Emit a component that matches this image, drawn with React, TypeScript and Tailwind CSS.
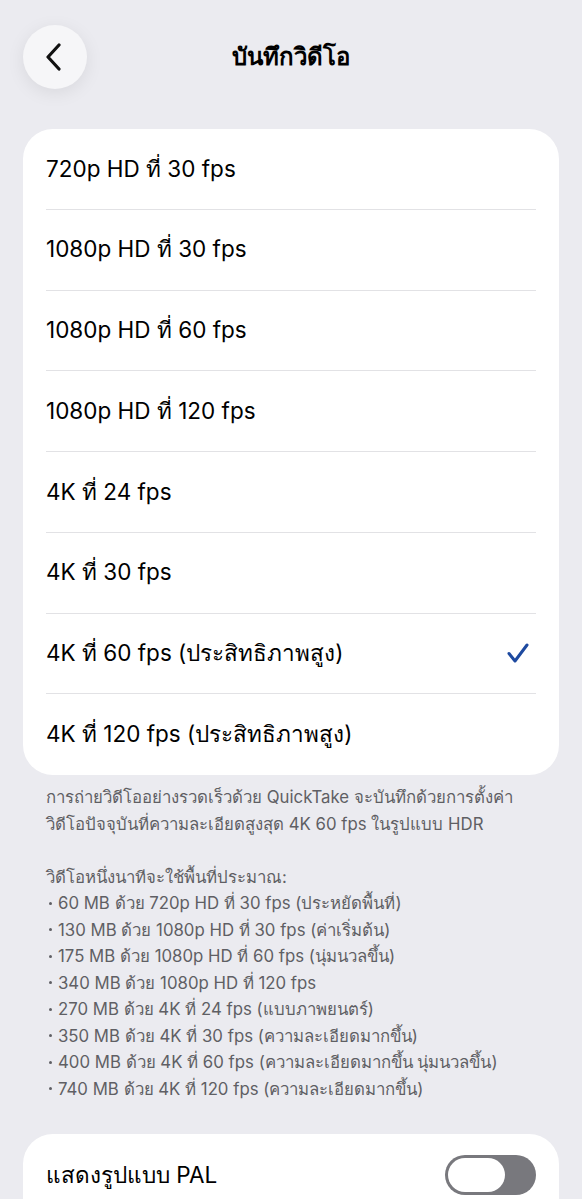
import React from "react";

const options = [
  "720p HD ที่ 30 fps",
  "1080p HD ที่ 30 fps",
  "1080p HD ที่ 60 fps",
  "1080p HD ที่ 120 fps",
  "4K ที่ 24 fps",
  "4K ที่ 30 fps",
  "4K ที่ 60 fps (ประสิทธิภาพสูง)",
  "4K ที่ 120 fps (ประสิทธิภาพสูง)",
];

const sizes = [
  "60 MB ด้วย 720p HD ที่ 30 fps (ประหยัดพื้นที่)",
  "130 MB ด้วย 1080p HD ที่ 30 fps (ค่าเริ่มต้น)",
  "175 MB ด้วย 1080p HD ที่ 60 fps (นุ่มนวลขึ้น)",
  "340 MB ด้วย 1080p HD ที่ 120 fps",
  "270 MB ด้วย 4K ที่ 24 fps (แบบภาพยนตร์)",
  "350 MB ด้วย 4K ที่ 30 fps (ความละเอียดมากขึ้น)",
  "400 MB ด้วย 4K ที่ 60 fps (ความละเอียดมากขึ้น นุ่มนวลขึ้น)",
  "740 MB ด้วย 4K ที่ 120 fps (ความละเอียดมากขึ้น)",
];

export default function App() {
  return (
    <div
      className="min-h-[1199px] w-[582px] bg-[#EBEBF0] text-black"
      style={{ fontFamily: 'Inter, "Noto Sans", sans-serif' }}
    >
      {/* Header */}
      <div className="relative flex h-[114px] items-start">
        <div className="ml-[23px] mt-[25px] flex h-[64px] w-[64px] items-center justify-center rounded-full bg-[#F6F6F8] shadow-[0_4px_18px_rgba(0,0,0,0.08)]">
          <svg width="18" height="28" viewBox="0 0 18 28" className="-ml-[2px]">
            <polyline
              points="14,2 3,14 14,26"
              fill="none"
              stroke="#111"
              strokeWidth="3.2"
              strokeLinecap="round"
              strokeLinejoin="round"
            />
          </svg>
        </div>
        <div className="absolute left-0 right-0 top-[38px] text-center text-[24px] font-semibold leading-[38px]">
          บันทึกวิดีโอ
        </div>
      </div>

      {/* Options card */}
      <div className="mx-[23px] mt-[15px] overflow-hidden rounded-[30px] bg-white">
        {options.map((o, i) => (
          <div
            key={o}
            className={
              i === options.length - 1
                ? "mx-[23px] flex h-[80.75px] items-center justify-between"
                : "mx-[23px] flex h-[80.75px] items-center justify-between border-b border-[#E2E2E5]"
            }
          >
            <span className="text-[22.5px] leading-none">{o}</span>
            {i === 6 && (
              <svg width="22" height="22" viewBox="0 0 22 22" className="mr-[7px]">
                <polyline
                  points="2,11.5 8,19 20,3"
                  fill="none"
                  stroke="#1E4AA0"
                  strokeWidth="3"
                  strokeLinecap="round"
                  strokeLinejoin="round"
                />
              </svg>
            )}
          </div>
        ))}
      </div>

      {/* Footer */}
      <div className="whitespace-nowrap pl-[46px] pt-[9px] text-[16.8px] leading-[26.5px] text-[#5F5F64]">
        <p>การถ่ายวิดีโออย่างรวดเร็วด้วย QuickTake จะบันทึกด้วยการตั้งค่า</p>
        <p>วิดีโอปัจจุบันที่ความละเอียดสูงสุด 4K 60 fps ในรูปแบบ HDR</p>
        <p>&nbsp;</p>
        <p>วิดีโอหนึ่งนาทีจะใช้พื้นที่ประมาณ:</p>
        {sizes.map((s) => (
          <p key={s} className="flex items-center">
            <span className="ml-[3px] mr-[6px] inline-block h-[3px] w-[3px] rounded-full bg-[#5F5F64]" />
            <span>{s}</span>
          </p>
        ))}
      </div>

      {/* PAL card */}
      <div className="mx-[23px] mt-[32px] flex h-[82px] items-center justify-between rounded-t-[30px] bg-white px-[23px]">
        <span className="text-[22.5px] leading-none">แสดงรูปแบบ PAL</span>
        <div className="relative h-[40px] w-[91px] rounded-full bg-[#78787D]">
          <div className="absolute left-[3px] top-[3px] h-[34px] w-[57px] rounded-full bg-white" />
        </div>
      </div>
    </div>
  );
}
